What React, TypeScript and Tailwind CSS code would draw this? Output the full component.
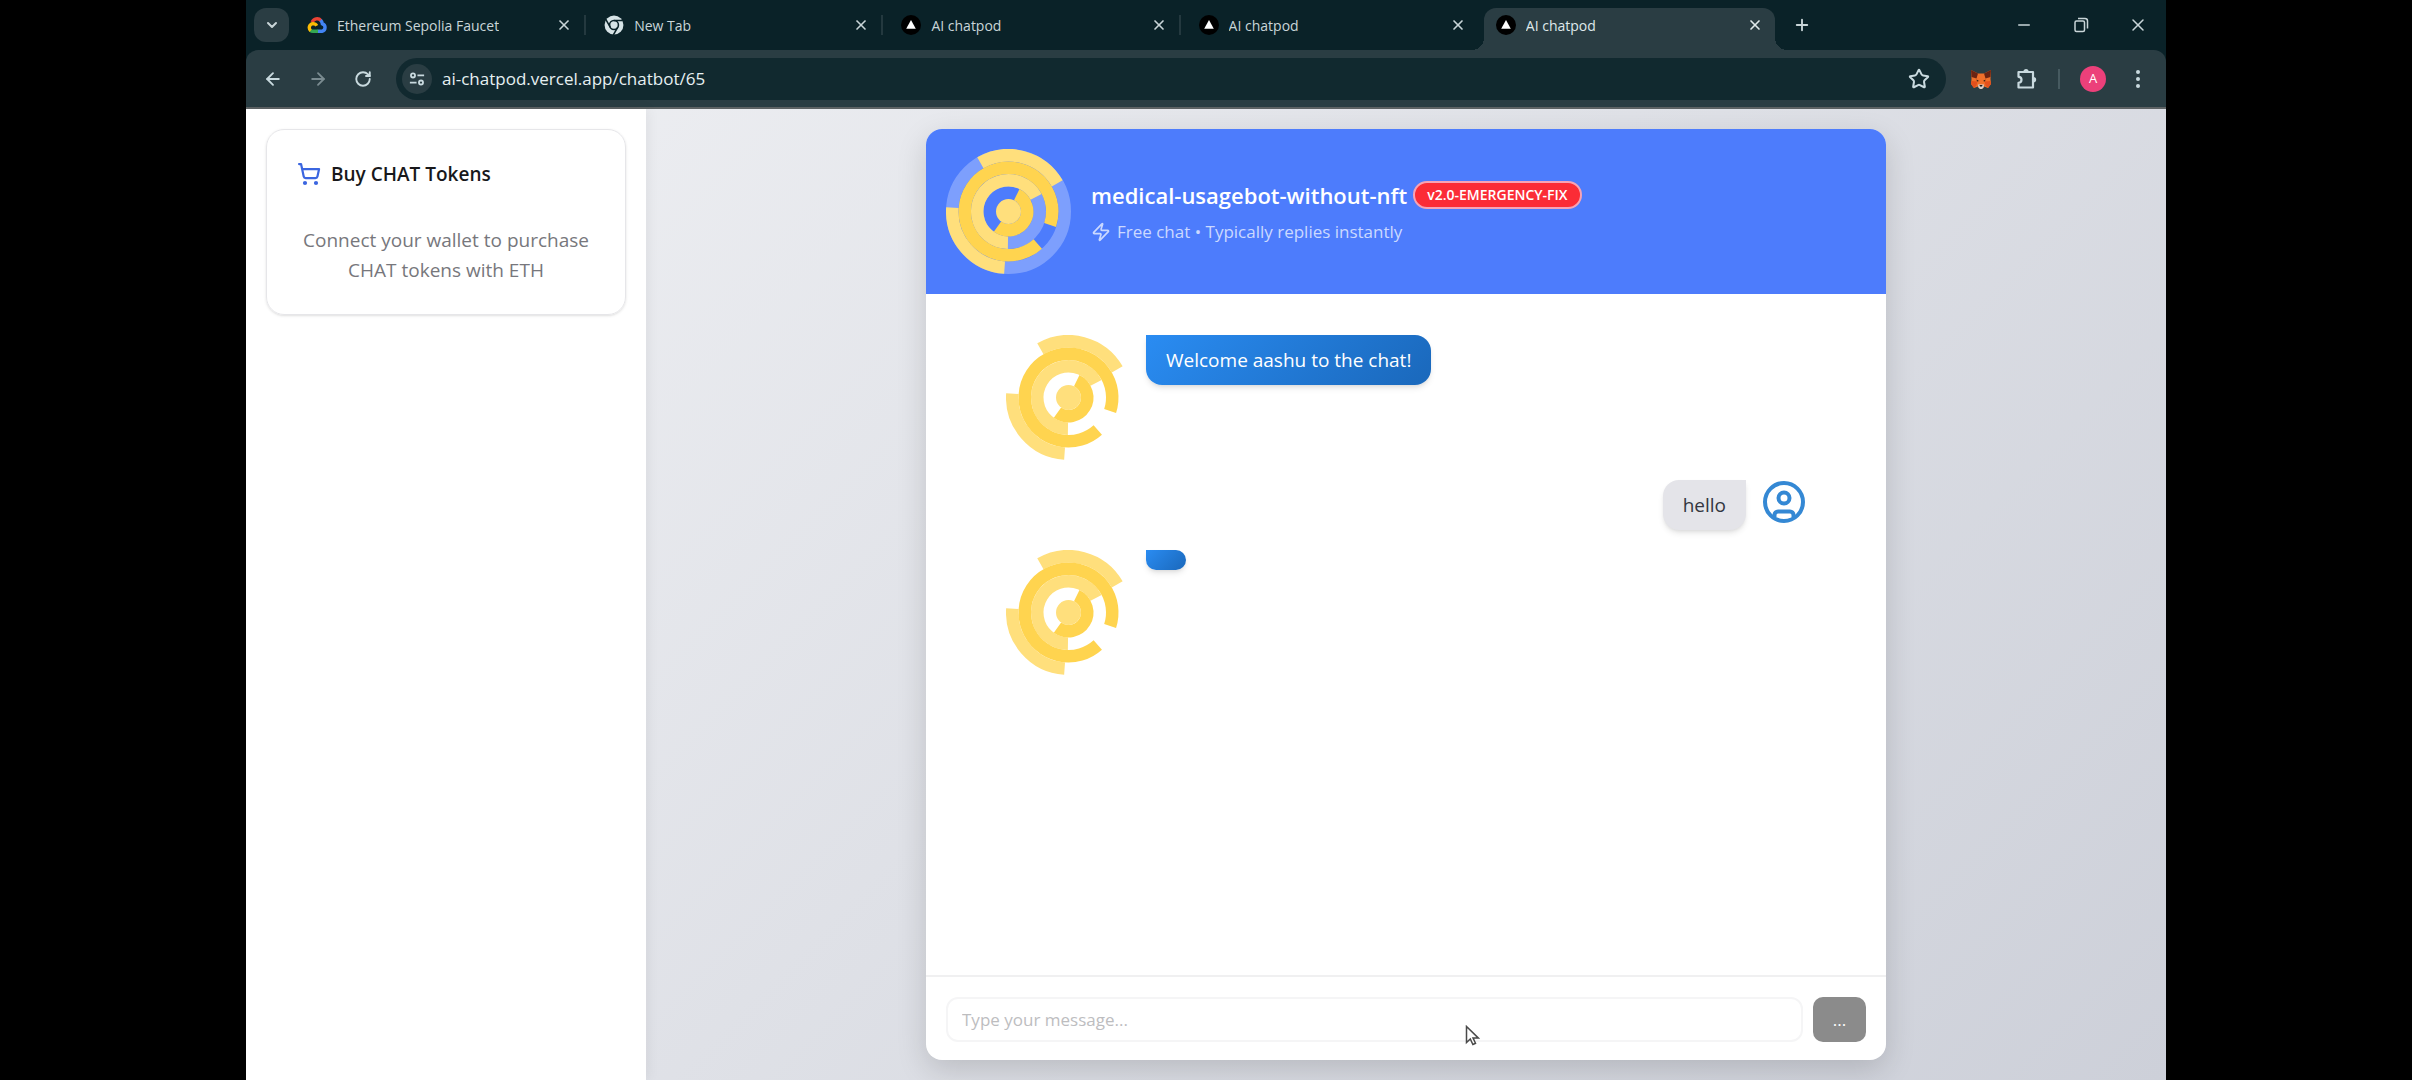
import { useState } from 'react';
import { ArrowLeft, ArrowRight, ChevronDown, Minus, Plus, RotateCw, ShoppingCart, Star, X, Zap } from 'lucide-react';

interface Tab {
  title: string;
  icon: 'cloud' | 'chrome' | 'vercel';
}

interface Message {
  id: number;
  from: 'bot' | 'user';
  text: string;
}

const tabs: Tab[] = [
  { title: 'Ethereum Sepolia Faucet', icon: 'cloud' },
  { title: 'New Tab', icon: 'chrome' },
  { title: 'AI chatpod', icon: 'vercel' },
  { title: 'AI chatpod', icon: 'vercel' },
  { title: 'AI chatpod', icon: 'vercel' },
];

const messages: Message[] = [
  { id: 1, from: 'bot', text: 'Welcome aashu to the chat!' },
  { id: 2, from: 'user', text: 'hello' },
  { id: 3, from: 'bot', text: '' },
];

// Arc on a 100x100 box, angles in degrees clockwise from the top
function arc(r: number, from: number, to: number) {
  const point = (deg: number) => {
    const rad = ((deg - 90) * Math.PI) / 180;
    return (50 + r * Math.cos(rad)).toFixed(2) + ' ' + (50 + r * Math.sin(rad)).toFixed(2);
  };
  return `M${point(from)}A${r} ${r} 0 ${to - from > 180 ? 1 : 0} 1 ${point(to)}`;
}

function BotAvatar({ tracks = false }: { tracks?: boolean }) {
  return (
    <svg className="size-[125px] shrink-0" viewBox="0 0 100 100" fill="none" strokeWidth={10} role="img" aria-label="Bot avatar">
      {tracks && (
        <g stroke="#ffffff" strokeOpacity={0.27}>
          <circle cx="50" cy="50" r="45" />
          <circle cx="50" cy="50" r="25" />
        </g>
      )}
      <g stroke="#ffdf7c">
        <path d={arc(45, -30, 60)} />
        <path d={arc(45, 184, 274)} />
        <path d={arc(25, 181, 422)} />
      </g>
      <g stroke="#ffd44f">
        <path d={arc(35, 138, 468)} />
        <path d={arc(15, 26, 216)} />
      </g>
      <circle cx="50" cy="50" r="10" fill="#ffdf7c" />
    </svg>
  );
}

function UserAvatar() {
  return (
    <svg className="size-11 shrink-0" viewBox="0 0 44 44" fill="none" stroke="#3488d4" strokeWidth={4} role="img" aria-label="User avatar">
      <circle cx="22" cy="22" r="19" />
      <circle cx="22" cy="18" r="5.5" />
      <path d="M12.5 37v-2a3.5 3.5 0 0 1 3.5-3.5h12a3.5 3.5 0 0 1 3.5 3.5v2" />
    </svg>
  );
}

function Favicon({ icon }: { icon: Tab['icon'] }) {
  if (icon === 'cloud') {
    return (
      <svg className="size-5 shrink-0" viewBox="0 0 20 20" fill="none" strokeWidth={3.4}>
        <path d="M5.2 7.2A5.2 5.2 0 0 1 14 5.6" stroke="#ea4335" />
        <path d="M13.6 5.2a5.6 5.6 0 0 1 1.8 3.6 3.9 3.9 0 0 1-.4 7.5H10.5" stroke="#4285f4" />
        <path d="M11 16.3H6a3.8 3.8 0 0 1-2.7-1.1" stroke="#34a853" />
        <path d="M3.7 15.6A4 4 0 0 1 6 8.6c1.8 0 3 .8 3.7 2.2" stroke="#fbbc05" />
      </svg>
    );
  }
  if (icon === 'chrome') {
    return (
      <svg className="size-5 shrink-0" viewBox="0 0 18 18">
        <circle cx="9" cy="9" r="8.5" fill="#d6e3e6" />
        <g stroke="#0a2228" strokeWidth={1.4} fill="none">
          <circle cx="9" cy="9" r="4" />
          <path d="M9 5h8M5.6 11l-4-7M12.4 11l-4 7" />
        </g>
      </svg>
    );
  }
  return (
    <svg className="size-5 shrink-0" viewBox="0 0 20 20">
      <circle cx="10" cy="10" r="10" fill="#000000" />
      <path d="M10 5l4.8 8.8H5.2z" fill="#ffffff" />
    </svg>
  );
}

function TabStrip() {
  const [active, setActive] = useState(tabs.length - 1);

  return (
    <div className="flex h-[50px] items-end bg-[#0a2228] pl-2 text-[#c9d5d8]">
      <button className="mb-2 flex h-[34px] w-[35px] shrink-0 items-center justify-center rounded-xl bg-[#2a3d43]" aria-label="Search tabs">
        <ChevronDown className="size-4" strokeWidth={3} />
      </button>
      <div className="ml-1.5 flex max-w-[1486px] flex-1" role="tablist">
        {tabs.map((tab, index) => {
          const isActive = index === active;
          return (
            <div key={index} className="relative flex h-[42px] flex-1 items-center pr-1.5">
              <div
                className={
                  'flex h-full flex-1 items-center pr-3 pl-3 ' +
                  (isActive ? 'rounded-t-xl bg-[#2a3d43] text-[#dfe9eb]' : '')
                }
              >
                <button
                  role="tab"
                  aria-selected={isActive}
                  onClick={() => setActive(index)}
                  className="flex min-w-0 flex-1 items-center gap-2.5 pb-2 text-left text-[14px]"
                >
                  <Favicon icon={tab.icon} />
                  <span className="truncate">{tab.title}</span>
                </button>
                <button className="pb-2" aria-label="Close tab">
                  <X className="size-4" strokeWidth={2.5} />
                </button>
              </div>
              {!isActive && index !== active - 1 && <span className="mb-2 h-5 w-0.5 bg-[#24393f]" />}
              {isActive && (
                <>
                  <span className="absolute bottom-0 -left-3 size-3 bg-[radial-gradient(circle_at_0_0,#0a2228_12px,#2a3d43_12px)]" />
                  <span className="absolute right-[-6px] bottom-0 size-3 bg-[radial-gradient(circle_at_100%_0,#0a2228_12px,#2a3d43_12px)]" />
                </>
              )}
            </div>
          );
        })}
      </div>
      <button className="mb-2 ml-1 flex size-[34px] items-center justify-center" aria-label="New tab">
        <Plus className="size-[18px]" strokeWidth={2.5} />
      </button>
      <div className="mb-2 ml-auto flex h-[34px] items-center">
        <button className="flex w-[57px] justify-center" aria-label="Minimize">
          <Minus className="size-[18px]" strokeWidth={2} />
        </button>
        <button className="flex w-[57px] justify-center" aria-label="Restore">
          <svg className="size-4" viewBox="0 0 16 16" fill="none" stroke="currentColor" strokeWidth={1.5}>
            <rect x="2" y="4" width="9.5" height="10.5" rx="1.5" />
            <path d="M5 1.5h7a2.5 2.5 0 0 1 2.5 2.5v7.5" />
          </svg>
        </button>
        <button className="flex w-[57px] justify-center" aria-label="Close window">
          <X className="size-5" strokeWidth={1.8} />
        </button>
      </div>
    </div>
  );
}

function FoxIcon() {
  return (
    <svg className="size-[22px]" viewBox="0 0 22 22">
      <path d="M1 2l7 3.5h6L21 2l-.5 9 .5 5-3 4-4-1.5-1.5 2h-3L8 18.5 4 20l-3-4 .5-5z" fill="#f0702a" />
      <path d="M1 2l7 3.5-1.500 5L1.500 9zM21 2l-7 3.500 1.500 5 5-1.500z" fill="#6b2413" />
      <path d="M1.5 13l6 .5-1 4L4 20l-3-4zM20.5 13l-6 .5 1 4L18 20l3-4z" fill="#e2501d" />
      <path d="M6.5 11.5L9 13l-2 .5zM15.5 11.5L13 13l2 .5z" fill="#2b1a14" />
      <path d="M8 16.5h6l-.5 3L12 21h-2l-1.5-1.5z" fill="#d9cfc8" />
      <path d="M9.5 17h3l-.5 1.5h-2z" fill="#1c1c1c" />
    </svg>
  );
}

function Toolbar() {
  return (
    <div className="bg-[#0a2228]">
      <div className="flex h-[59px] items-center rounded-t-xl border-b-2 border-[#5d6264] bg-[#2a3d43] text-[#c9dadf]">
        <div className="flex w-[150px] shrink-0 items-center pl-1">
          <button className="flex w-[46px] justify-center" aria-label="Back">
            <ArrowLeft className="size-5" strokeWidth={2.2} />
          </button>
          <button className="flex w-11 justify-center text-[#7a8b90]" aria-label="Forward">
            <ArrowRight className="size-5" strokeWidth={2.2} />
          </button>
          <button className="flex w-[46px] justify-center" aria-label="Reload">
            <RotateCw className="size-[18px]" strokeWidth={2.5} />
          </button>
        </div>
        <div className="flex h-[42px] flex-1 items-center rounded-full bg-[#11292f] pr-4 pl-1.5">
          <button className="flex size-[30px] items-center justify-center rounded-full bg-[#2a3d43]" aria-label="Site information">
            <svg className="size-4" viewBox="0 0 18 18" fill="none" stroke="currentColor" strokeWidth={2}>
              <circle cx="4.5" cy="5" r="2.3" />
              <path d="M9.5 5H17M1 13h7.5" />
              <circle cx="13.5" cy="13" r="2.3" />
            </svg>
          </button>
          <input
            className="ml-2.5 min-w-0 flex-1 bg-transparent text-[17px] text-[#e6f0f2] outline-none"
            aria-label="Address"
            defaultValue="ai-chatpod.vercel.app/chatbot/65"
          />
          <button aria-label="Bookmark this tab">
            <Star className="size-[22px]" strokeWidth={2.2} strokeLinejoin="miter" />
          </button>
        </div>
        <button className="ml-6 flex" aria-label="MetaMask">
          <FoxIcon />
        </button>
        <button className="ml-6 flex" aria-label="Extensions">
          <svg className="size-[22px]" viewBox="0 0 22 22" fill="none" stroke="currentColor" strokeWidth={2.2} strokeLinejoin="round">
            <path d="M2.5 4H17v15.500H2.500v-4.700a3 3 0 0 0 0-6z" />
            <path d="M8.5 3.5a1.5 1.5 0 0 1 3 0M17.5 10.2a1.5 1.5 0 0 1 0 3.200" />
          </svg>
        </button>
        <span className="ml-5 h-5 w-0.5 bg-[#465a60]" />
        <button className="ml-5 size-[26px] rounded-full bg-[#ec407a] text-[13px] font-medium text-white" aria-label="Profile">
          A
        </button>
        <button className="mr-4 ml-5 flex w-6 justify-center" aria-label="Menu">
          <svg className="h-5 w-1.5" viewBox="0 0 6 20" fill="currentColor">
            <circle cx="3" cy="3" r="2" />
            <circle cx="3" cy="10" r="2" />
            <circle cx="3" cy="17" r="2" />
          </svg>
        </button>
      </div>
    </div>
  );
}

function Sidebar() {
  return (
    <aside className="z-10 w-[400px] shrink-0 bg-white p-5 shadow-[2px_0_12px_rgba(0,0,0,0.06)]">
      <section className="rounded-[18px] border border-[#e6e6e9] px-[30px] py-[29px] shadow-sm">
        <h2 className="flex items-center gap-2.5 text-[19px] leading-[30px] font-semibold text-[#18181b]">
          <ShoppingCart className="size-6 text-[#3b66e0]" strokeWidth={2.2} />
          Buy CHAT Tokens
        </h2>
        <p className="mt-9 text-center text-[19px] leading-[30px] text-[#77777c]">
          Connect your wallet to purchase CHAT tokens with ETH
        </p>
      </section>
    </aside>
  );
}

function ChatHeader() {
  return (
    <header className="flex items-center gap-5 bg-[#4d7cfc] p-5">
      <BotAvatar tracks />
      <div>
        <div className="flex items-center gap-1.5">
          <h1 className="text-[22px] leading-[30px] font-semibold text-white">medical-usagebot-without-nft</h1>
          <span className="rounded-full border-2 border-[#f7a3b4] bg-[#fb2c36] px-3 text-[14px] leading-6 font-semibold text-white">
            v2.0-EMERGENCY-FIX
          </span>
        </div>
        <p className="mt-2.5 flex items-center gap-1.5 text-[17px] leading-6 text-[#cbd9ff]">
          <Zap className="size-5" strokeWidth={2} />
          Free chat • Typically replies instantly
        </p>
      </div>
    </header>
  );
}

function ChatMessage({ message }: { message: Message }) {
  if (message.from === 'user') {
    return (
      <div className="flex items-start justify-end gap-4">
        <p className="rounded-2xl rounded-tr-none bg-[#e4e4e9] px-5 py-2.5 text-[19px] leading-[30px] text-[#33363f] shadow-md">
          {message.text}
        </p>
        <UserAvatar />
      </div>
    );
  }

  return (
    <div className="flex items-start gap-[15px]">
      <BotAvatar />
      <p className="rounded-2xl rounded-tl-none bg-linear-135 from-[#2a8cf2] to-[#1a68bb] px-5 py-2.5 text-[19px] leading-[30px] text-white shadow-md">
        {message.text}
      </p>
    </div>
  );
}

function MessageForm() {
  const [draft, setDraft] = useState('');

  return (
    <form className="flex gap-2.5 border-t-2 border-[#f0f0f1] px-5 pt-5 pb-[18px]" onSubmit={(e) => e.preventDefault()}>
      <input
        className="h-[45px] min-w-0 flex-1 rounded-xl border-2 border-[#f5f5f6] px-3.5 text-[17px] text-[#333333] outline-none placeholder:text-[#bdbdbf]"
        aria-label="Message"
        placeholder="Type your message..."
        value={draft}
        onChange={(e) => setDraft(e.target.value)}
      />
      <button type="submit" className="h-[45px] w-[53px] shrink-0 rounded-[10px] bg-[#8b8b8b] text-[17px] text-white">
        ...
      </button>
    </form>
  );
}

export default function App() {
  return (
    <div className="h-screen bg-black font-['Open_Sans','Noto_Sans',sans-serif]">
      <div className="relative mx-auto flex h-full max-w-[1920px] flex-col overflow-hidden">
        <TabStrip />
        <Toolbar />
        <div className="flex min-h-0 flex-1 bg-linear-135 from-[#f0f1f4] to-[#cdd0d9]">
          <Sidebar />
          <main className="min-w-0 flex-1 p-5">
            <div className="mx-auto flex h-full max-w-[960px] flex-col overflow-hidden rounded-2xl bg-white shadow-[0_10px_30px_rgba(0,0,0,0.15)]">
              <ChatHeader />
              <div className="flex flex-1 flex-col gap-5 overflow-y-auto px-20 py-[41px]">
                {messages.map((message) => (
                  <ChatMessage key={message.id} message={message} />
                ))}
              </div>
              <MessageForm />
            </div>
          </main>
        </div>

        {/* Mouse pointer */}
        <svg className="pointer-events-none absolute top-[1025px] left-[1219px] h-[21px] w-[15px]" viewBox="0 0 15 21">
          <path d="M1.5 1.5v16l3.8-3.6 2.6 5.6 2.6-1.2L8 12.900h5.200z" fill="#ffffff" stroke="#4a4a4a" strokeWidth={1.5} />
        </svg>
      </div>
    </div>
  );
}
